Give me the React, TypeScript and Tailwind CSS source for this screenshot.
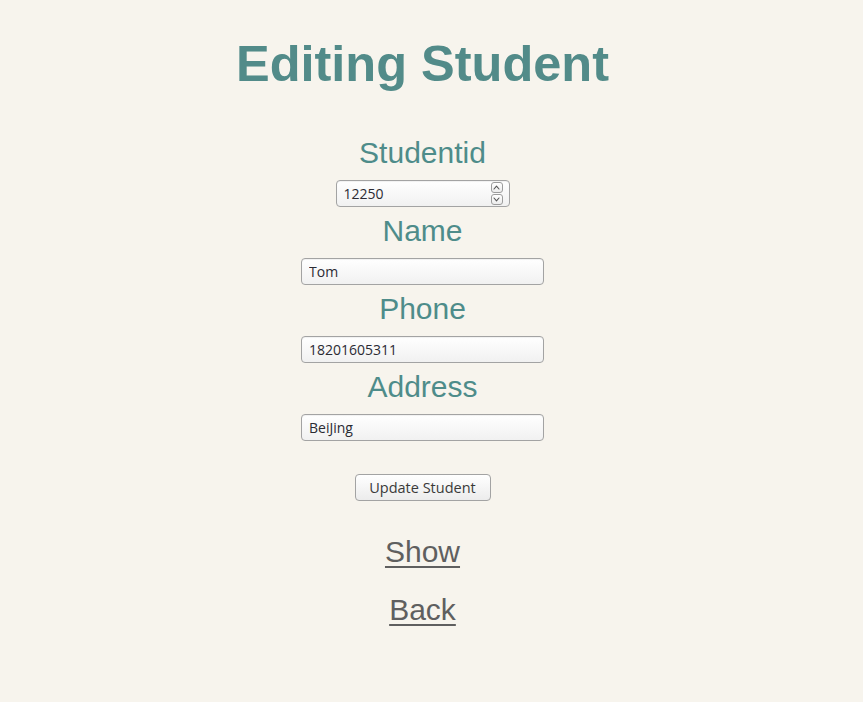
import React from "react";

const fields = [
  { label: "Name", value: "Tom" },
  { label: "Phone", value: "18201605311" },
  { label: "Address", value: "BeiJing" },
];

const inputBox =
  "h-[27px] rounded-[4px] border border-[#a3a3a3] bg-gradient-to-b from-[#ffffff] to-[#f1f1f1] shadow-[inset_0_1px_1px_rgba(0,0,0,0.06)]";

const Chevron: React.FC<{ up?: boolean }> = ({ up }) => (
  <div className="w-[12px] h-[11px] rounded-[3px] border border-[#9c9c9c] bg-gradient-to-b from-white to-[#ececec] flex items-center justify-center">
    <svg width="7" height="5" viewBox="0 0 7 5" fill="none">
      <path
        d={up ? "M1 4L3.5 1.2L6 4" : "M1 1L3.5 3.8L6 1"}
        stroke="#555"
        strokeWidth="1.1"
        strokeLinecap="round"
        strokeLinejoin="round"
      />
    </svg>
  </div>
);

export default function App() {
  return (
    <div className="min-h-[702px] w-full bg-[#f7f4ed] font-['Liberation_Sans',Arial,sans-serif]">
      <div className="w-[845px] flex flex-col items-center">
        {/* Title */}
        <h1 className="mt-[35px] text-[50.5px] leading-[58px] font-bold text-[#528b89]">
          Editing Student
        </h1>

        {/* Studentid */}
        <div className="mt-[43px] text-[30px] leading-[34px] text-[#4e8c8a]">
          Studentid
        </div>
        <div
          className={`mt-[10px] w-[174px] flex items-center pl-[7px] pr-[6px] ${inputBox}`}
        >
          <input
            readOnly
            value="12250"
            className="flex-1 min-w-0 bg-transparent outline-none text-[14px] text-[#2b2b33] font-['Open_Sans',sans-serif]"
          />
          <div className="flex flex-col gap-[1px]">
            <Chevron up />
            <Chevron />
          </div>
        </div>

        {fields.map((f) => (
          <React.Fragment key={f.label}>
            <div className="mt-[7px] text-[30px] leading-[34px] text-[#4e8c8a]">
              {f.label}
            </div>
            <input
              readOnly
              value={f.value}
              className={`mt-[10px] w-[243px] px-[7px] outline-none text-[14px] text-[#2b2b33] font-['Open_Sans',sans-serif] ${inputBox}`}
            />
          </React.Fragment>
        ))}

        {/* Submit */}
        <button className="mt-[33px] w-[136px] h-[27px] rounded-[4px] border border-[#a3a3a3] bg-gradient-to-b from-[#ffffff] to-[#ececec] text-[14.5px] text-[#3a3a3a] font-['Open_Sans',sans-serif]">
          Update Student
        </button>

        {/* Links */}
        <a
          href="#"
          className="mt-[34px] text-[30px] leading-[34px] text-[#5f5f5f] underline underline-offset-[4px] decoration-[2px]"
        >
          Show
        </a>
        <a
          href="#"
          className="mt-[24px] text-[30px] leading-[34px] text-[#5f5f5f] underline underline-offset-[4px] decoration-[2px]"
        >
          Back
        </a>
      </div>
    </div>
  );
}
